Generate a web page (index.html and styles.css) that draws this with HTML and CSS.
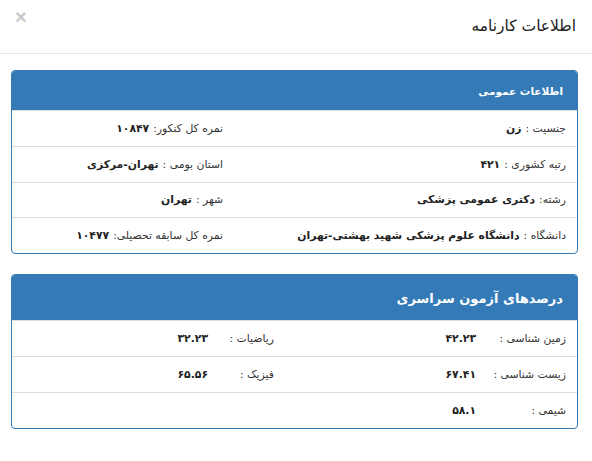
FILE: index.html
```html
<!DOCTYPE html>
<html lang="fa" dir="rtl">
<head>
    <meta charset="UTF-8">
    <meta name="viewport" content="width=device-width, initial-scale=1.0">
    <title>اطلاعات کارنامه</title>
    <link rel="stylesheet" href="styles.css">
</head>
<body>
    <div class="modal-header">
        <h4 class="modal-title">اطلاعات کارنامه</h4>
        <button type="button" class="close">&times;</button>
    </div>
    <div class="modal-body">
        <div class="panel">
            <div class="panel-heading small">اطلاعات عمومی</div>
            <div class="info-table">
                <div class="cell">جنسیت : <b>زن</b></div>
                <div class="cell">نمره کل کنکور: <b>۱۰۸۴۷</b></div>
                <div class="cell">رتبه کشوری : <b>۴۲۱</b></div>
                <div class="cell">استان بومی : <b>تهران-مرکزی</b></div>
                <div class="cell">رشته: <b>دکتری عمومی پزشکی</b></div>
                <div class="cell">شهر : <b>تهران</b></div>
                <div class="cell">دانشگاه : <b>دانشگاه علوم پزشکی شهید بهشتی-تهران</b></div>
                <div class="cell">نمره کل سابقه تحصیلی: <b>۱۰۴۷۷</b></div>
            </div>
        </div>

        <div class="panel">
            <div class="panel-heading large">درصدهای آزمون سراسری</div>
            <div class="score-table">
                <div class="cell">زمین شناسی :</div>
                <div class="cell"><b>۴۲.۲۳</b></div>
                <div class="cell">ریاضیات :</div>
                <div class="cell"><b>۳۲.۲۳</b></div>

                <div class="cell">زیست شناسی :</div>
                <div class="cell"><b>۶۷.۴۱</b></div>
                <div class="cell">فیزیک :</div>
                <div class="cell"><b>۶۵.۵۶</b></div>

                <div class="cell">شیمی :</div>
                <div class="cell"><b>۵۸.۱</b></div>
                <div class="cell"></div>
                <div class="cell"></div>
            </div>
        </div>
    </div>
</body>
</html>
```

FILE: styles.css
```css
* {
  margin: 0;
  padding: 0;
  box-sizing: border-box;
}

body {
  background: #ffffff;
  color: #333333;
  font-family: 'DejaVu Sans', 'Noto Sans', sans-serif;
  font-size: 10.8px;
  direction: rtl;
}

.modal-header {
  display: flex;
  justify-content: space-between;
  align-items: center;
  height: 54px;
  padding: 0 16px 2px 12px;
  border-bottom: 1px solid #e5e5e5;
}

.modal-title {
  font-size: 15.5px;
  font-weight: normal;
  color: #222;
}

.close {
  background: none;
  border: none;
  color: #c8c8c8;
  font-size: 20px;
  font-weight: bold;
  font-family: 'Liberation Sans', sans-serif;
  margin-top: -16px;
  margin-left: 3px;
  cursor: pointer;
}

.modal-body {
  padding: 16px 14px 0 11px;
}

.panel {
  border: 1px solid #337ab7;
  border-radius: 4px;
  margin-bottom: 20px;
  overflow: hidden;
}

.panel-heading {
  background: #337ab7;
  color: #ffffff;
  font-weight: bold;
  padding: 0 14px;
  display: flex;
  align-items: center;
}

.panel-heading.small {
  height: 39px;
  font-size: 10.5px;
}

.panel-heading.large {
  height: 45px;
  font-size: 13px;
  padding-top: 2px;
}

.info-table {
  display: grid;
  grid-template-columns: 343px 1fr;
}

.score-table {
  display: grid;
  grid-template-columns: 90px 202px 66px 1fr;
}

.cell {
  height: 35.75px;
  padding: 0 11px;
  display: flex;
  align-items: center;
  border-top: 1px solid #dddddd;
  white-space: nowrap;
}

.score-table .cell {
  height: 36px;
}

.cell b {
  margin-right: 4px;
  color: #222;
}

.score-table .cell b {
  margin-right: 0;
}
```
